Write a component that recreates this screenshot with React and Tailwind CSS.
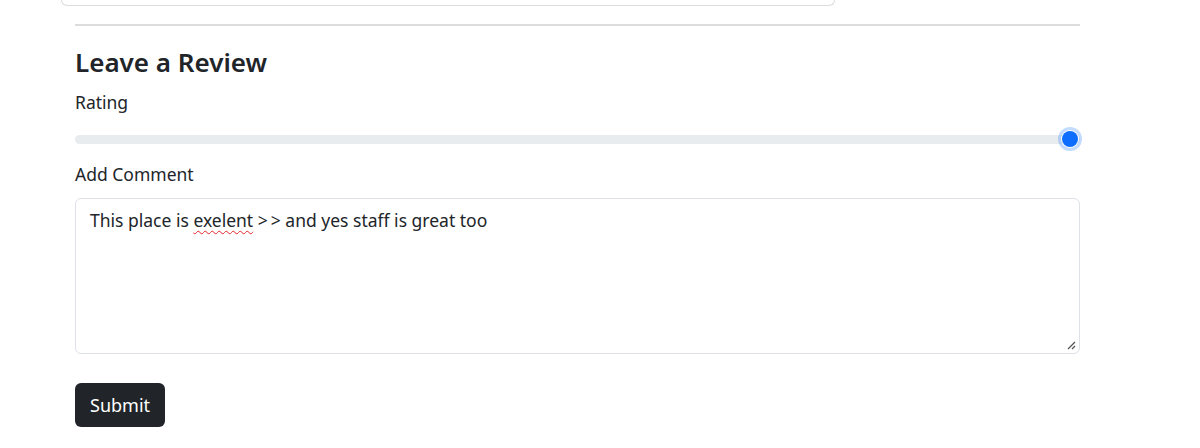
import React from 'react';

const font = { fontFamily: '"Noto Sans", "Open Sans", Arial, sans-serif' };

const RatingSlider = () => (
  <div className="relative h-[18px] flex items-center">
    <div className="w-full h-[9px] rounded-full bg-[#e9ecef]"></div>
    <div className="absolute right-[2px] top-[1px] w-[16px] h-[16px] rounded-full bg-[#0d6efd] shadow-[0_0_0_1px_#fff,0_0_0_4px_rgba(13,110,253,0.25)]"></div>
  </div>
);

const ResizeGrip = () => (
  <svg className="absolute right-[3px] bottom-[3px]" width="10" height="10" viewBox="0 0 10 10">
    <line x1="2" y1="9" x2="9" y2="2" stroke="#555" strokeWidth="1.2" />
    <line x1="6" y1="9" x2="9" y2="6" stroke="#555" strokeWidth="1.2" />
  </svg>
);

export default function App() {
  return (
    <div className="w-[1200px] h-[448px] bg-white text-[#212529] overflow-hidden" style={font}>
      {/* bottom of the card above */}
      <div className="ml-[61px] w-[774px] h-[6px] border border-t-0 border-[#dcdcdc] rounded-b-[8px]"></div>

      <div className="ml-[75px] w-[1005px]">
        <hr className="mt-[18px] border-0 border-t-2 border-[#dddddd]" />

        <h3 className="mt-[19px] text-[26px] leading-[34px] font-semibold text-[#212529]">Leave a Review</h3>

        <div className="mt-[11px] text-[17.5px] leading-[24px]">Rating</div>
        <div className="mt-[16px]">
          <RatingSlider />
        </div>

        <div className="mt-[14px] text-[17.5px] leading-[24px]">Add Comment</div>
        <div className="relative mt-[12px] h-[156px] border border-[#dee2e6] rounded-[6px] px-[14px] py-[9px] text-[17.5px] leading-[24px]">
          This place is{' '}
          <span className="underline decoration-wavy decoration-[#e5262b] decoration-1 underline-offset-[3px]">exelent</span>
          {' '}<span className="mr-[3px]">&gt;</span>&gt; and yes staff is great too
          <ResizeGrip />
        </div>

        <button className="mt-[29px] h-[44px] px-[15px] rounded-[6px] bg-[#212529] text-white text-[18px] leading-[27px]">
          Submit
        </button>
      </div>
    </div>
  );
}
